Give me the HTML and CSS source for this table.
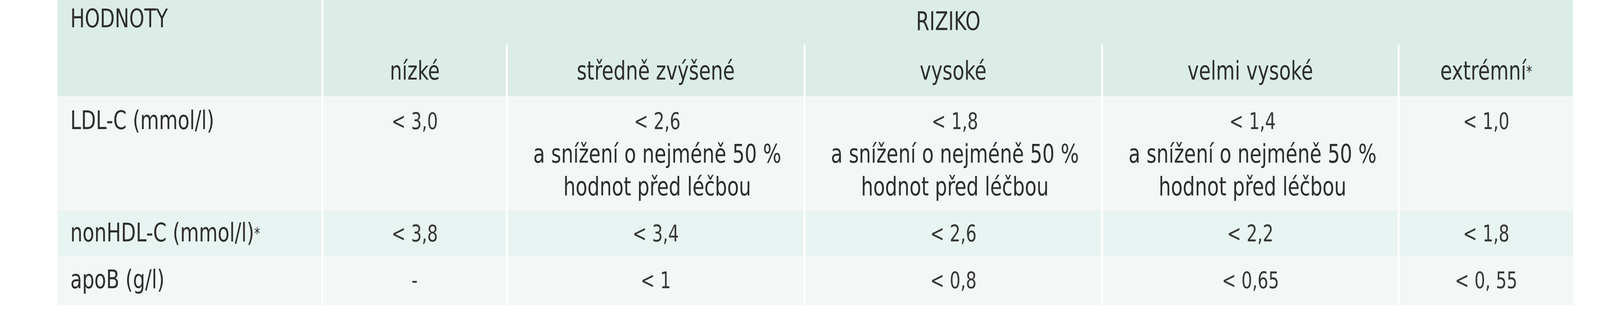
FILE: index.html
```html
<!DOCTYPE html>
<html lang="cs">
<head>
<meta charset="utf-8">
<title>Cílové hodnoty lipidů podle rizika</title>
<link rel="stylesheet" href="styles.css">
</head>
<body>
<div class="lipid-table">
  <div class="cell head head-values label"><span class="txt">HODNOTY</span></div>
  <div class="cell head head-risk sep"><span class="txt">RIZIKO</span></div>
  <div class="cell head sub sep"><span class="txt">nízké</span></div>
  <div class="cell head sub sep"><span class="txt">středně zvýšené</span></div>
  <div class="cell head sub sep"><span class="txt">vysoké</span></div>
  <div class="cell head sub sep"><span class="txt">velmi vysoké</span></div>
  <div class="cell head sub sep"><span class="txt">extrémní<sup class="mark">*</sup></span></div>

  <div class="cell body r-ldl label"><span class="txt">LDL-C (mmol/l)</span></div>
  <div class="cell body r-ldl sep"><span class="txt"><span class="num">&lt; 3,0</span></span></div>
  <div class="cell body r-ldl sep"><span class="txt"><span class="num">&lt; 2,6</span><br>a snížení o nejméně 50 %<br>hodnot před léčbou</span></div>
  <div class="cell body r-ldl sep"><span class="txt"><span class="num">&lt; 1,8</span><br>a snížení o nejméně 50 %<br>hodnot před léčbou</span></div>
  <div class="cell body r-ldl sep"><span class="txt"><span class="num">&lt; 1,4</span><br>a snížení o nejméně 50 %<br>hodnot před léčbou</span></div>
  <div class="cell body r-ldl sep"><span class="txt"><span class="num">&lt; 1,0</span></span></div>

  <div class="cell body r-non alt label"><span class="txt">nonHDL-C (mmol/l)<sup class="mark">*</sup></span></div>
  <div class="cell body r-non alt sep"><span class="txt"><span class="num">&lt; 3,8</span></span></div>
  <div class="cell body r-non alt sep"><span class="txt"><span class="num">&lt; 3,4</span></span></div>
  <div class="cell body r-non alt sep"><span class="txt"><span class="num">&lt; 2,6</span></span></div>
  <div class="cell body r-non alt sep"><span class="txt"><span class="num">&lt; 2,2</span></span></div>
  <div class="cell body r-non alt sep"><span class="txt"><span class="num">&lt; 1,8</span></span></div>

  <div class="cell body r-apo label"><span class="txt">apoB (g/l)</span></div>
  <div class="cell body r-apo sep"><span class="txt"><span class="num">-</span></span></div>
  <div class="cell body r-apo sep"><span class="txt"><span class="num">&lt; 1</span></span></div>
  <div class="cell body r-apo sep"><span class="txt"><span class="num">&lt; 0,8</span></span></div>
  <div class="cell body r-apo sep"><span class="txt"><span class="num">&lt; 0,65</span></span></div>
  <div class="cell body r-apo sep"><span class="txt"><span class="num">&lt; 0, 55</span></span></div>
</div>
</body>
</html>
```

FILE: styles.css
```css
html, body {
  margin: 0;
  padding: 0;
  background: #ffffff;
}

body {
  font-family: "DejaVu Sans Condensed", "DejaVu Sans", "Liberation Sans", sans-serif;
  font-size: 66px;
  line-height: 84px;
  color: #2e2e2e;
}

.lipid-table {
  margin-left: 147px;
  width: 3880px;
  display: grid;
  grid-template-columns: 676px 472px 762px 762px 759px 449px;
  grid-template-rows: 114px 133px 293px 117px 125px;
}

.cell {
  box-sizing: border-box;
  text-align: center;
  white-space: nowrap;
}

.txt {
  display: inline-block;
  transform: scaleX(0.83);
  transform-origin: 50% 50%;
}

.label {
  text-align: left;
  padding-left: 33px;
}

.label .txt {
  transform-origin: 0 50%;
}

.sep {
  border-left: 5px solid #ffffff;
}

.head {
  background: #dcede8;
}

.head-values {
  grid-row: 1 / span 2;
  padding-top: 6px;
}

.head-risk {
  grid-column: 2 / span 5;
  padding-top: 13px;
}

.sub {
  padding-top: 26px;
}

.body {
  background: #f3f8f7;
}

.body.alt {
  background: #e8f4f1;
}

.r-ldl {
  padding-top: 20px;
}

.r-non {
  padding-top: 15px;
}

.r-apo {
  padding-top: 18px;
}

.num {
  font-size: 58px;
  color: #383838;
}

.mark {
  font-size: 40px;
  line-height: 0;
  vertical-align: 6px;
}
```
